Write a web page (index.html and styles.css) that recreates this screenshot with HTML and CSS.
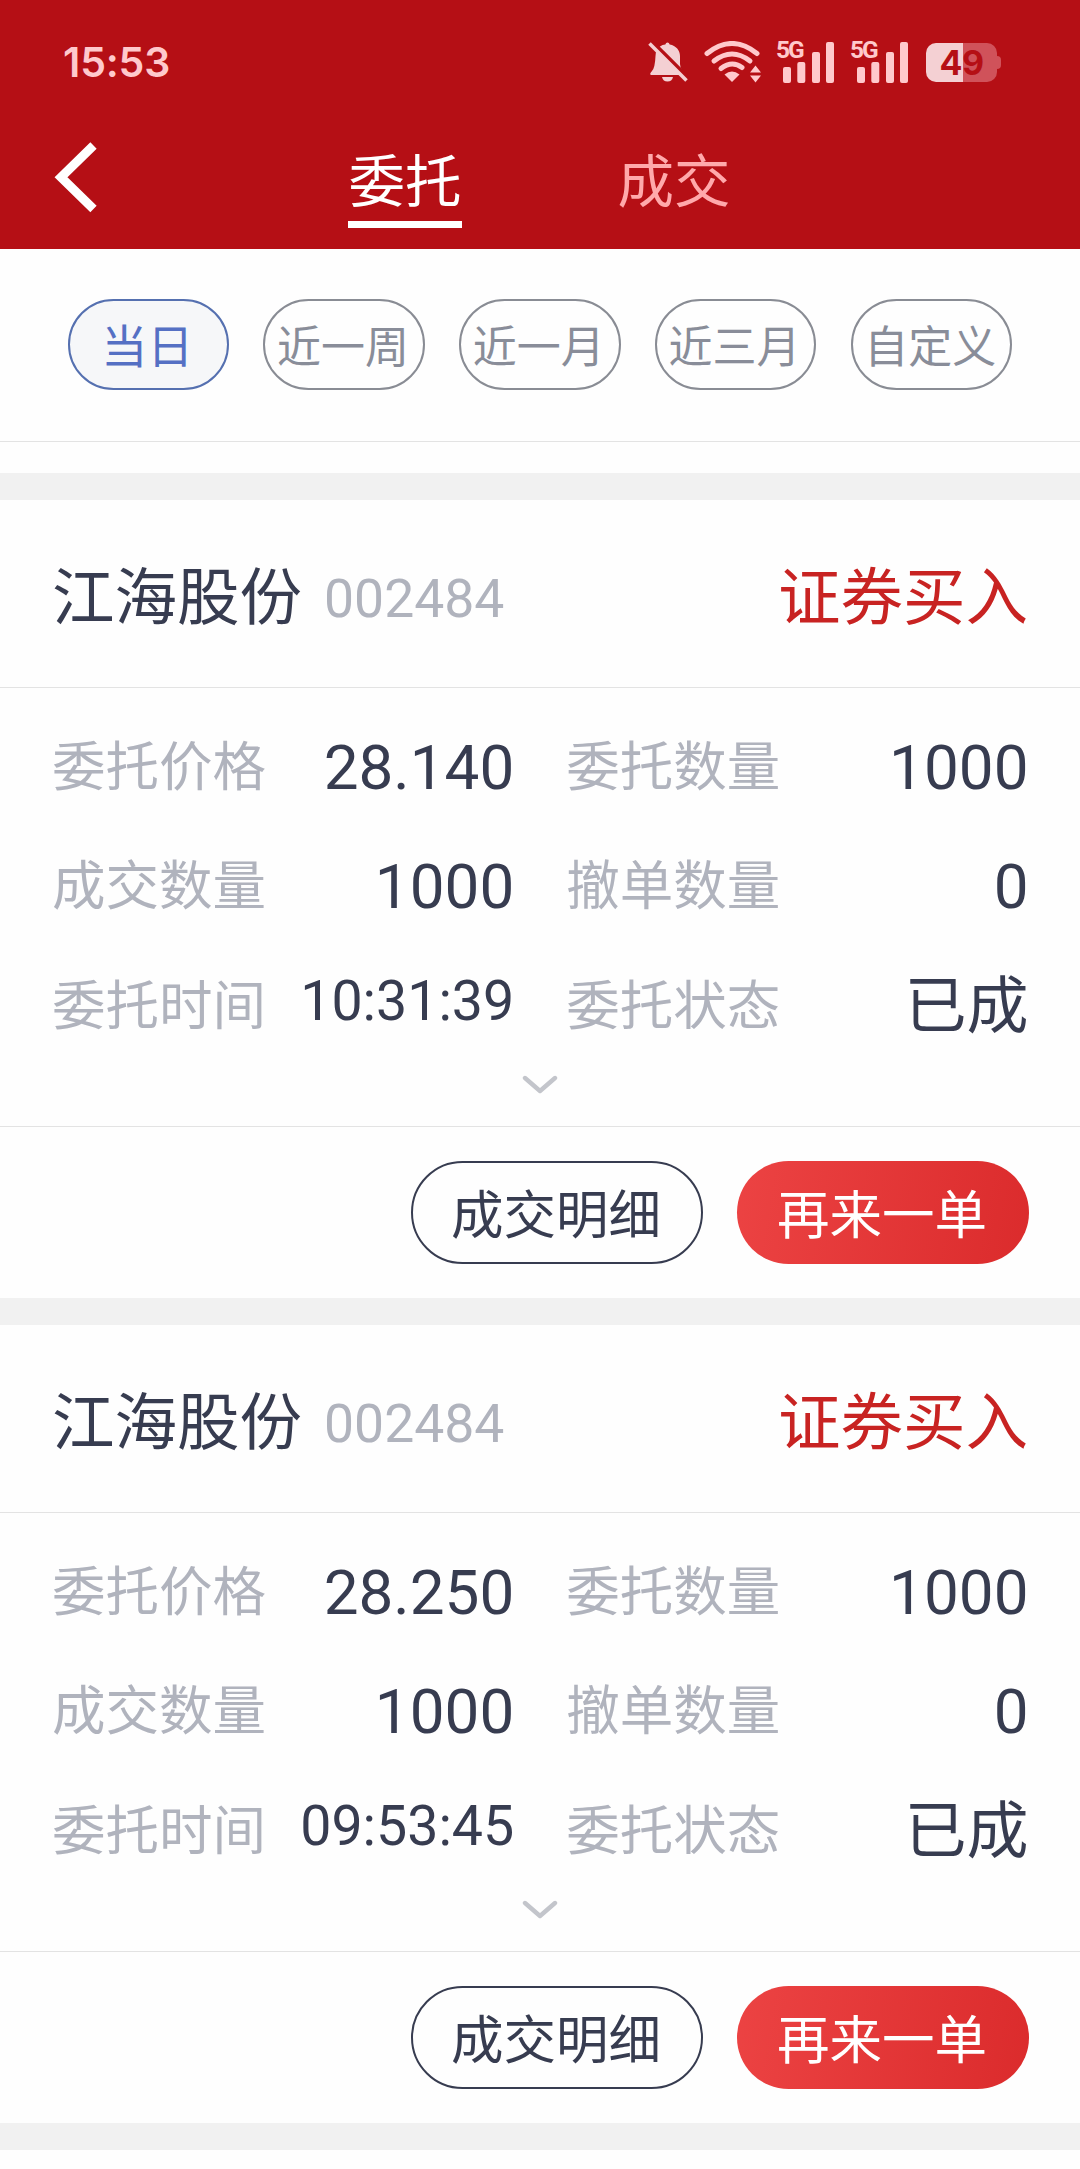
FILE: index.html
```html
<!DOCTYPE html>
<html lang="zh-CN">
<head>
<meta charset="utf-8">
<title>委托</title>
<link rel="stylesheet" href="styles.css">
</head>
<body>
<svg class="defs" aria-hidden="true">
  <symbol id="bars" viewBox="0 0 60 42">
    <rect x="6" y="26" width="8" height="16" rx="2"/>
    <rect x="20.3" y="21" width="8" height="21" rx="2"/>
    <rect x="35" y="11" width="8" height="31" rx="2"/>
    <rect x="49" y="1" width="8" height="41" rx="2"/>
  </symbol>
  <symbol id="chevron" viewBox="0 0 36 20">
    <path d="M3 3 L18 16 L33 3" fill="none" stroke="#c3c5cb" stroke-width="4.4" stroke-linecap="round" stroke-linejoin="round"/>
  </symbol>
</svg>
<header class="top">
  <div class="status">
    <span class="clock">15:53</span>
    <div class="status-icons">
      <svg class="bell" viewBox="0 0 40 40" width="40" height="40">
        <path d="M12 4.500 Q14.500 2.500 17.300 2.500 Q18 .500 19.500 .500 Q21 .500 21.700 2.500 C28 3.500 32 8.500 32 14 V22 Q32.500 28 37 31 Q38.500 33 36 33 H3 Q1 32 4 29 Q7 26 7.500 14 Q7.500 8 12 4.500 Z" fill="#f4d0d3"/>
        <path d="M14 35 H25 Q24 39.500 19.500 39.500 Q15 39.500 14 35Z" fill="#f4d0d3"/>
        <path d="M0 -4.300 L43 38.700" stroke="#b50f15" stroke-width="4"/>
        <path d="M1.500 1.500 L38.500 38.500" stroke="#f4d0d3" stroke-width="3.600"/>
      </svg>
      <svg class="wifi" viewBox="0 0 58 42" width="58" height="42">
        <g fill="none" stroke="#ffc9cc" stroke-width="5" stroke-linecap="round">
          <path d="M3 12.500 Q28 -7.500 53 12.500"/>
          <path d="M10 20 Q28 6 46 20"/>
          <path d="M17 27.500 Q28 19 38 26.500"/>
        </g>
        <path d="M20.500 33.500 Q28 27.500 35.500 33.500 L28 41 Z" fill="#ffc9cc"/>
        <path d="M46 31.500 L51.500 24.500 L57 31.500Z M46 34.500 H57 L51.500 41.500Z" fill="#ffc9cc"/>
      </svg>
      <div class="signal"><svg width="60" height="42" fill="#ffc9cc"><use href="#bars"/></svg><span class="net">5G</span></div>
      <div class="signal"><svg width="60" height="42" fill="#ffc9cc"><use href="#bars"/></svg><span class="net">5G</span></div>
      <div class="battery"><span class="level">49</span></div>
    </div>
  </div>
  <nav class="nav">
    <svg class="back" viewBox="0 0 44 72" width="44" height="72"><path d="M39.500 4.500 L7 36.300 L39.500 68" fill="none" stroke="#fff" stroke-width="9"/></svg>
    <span class="tab tab-on">委托</span>
    <span class="tab">成交</span>
  </nav>
</header>
<div class="filters">
  <span class="pill pill-on">当日</span>
  <span class="pill">近一周</span>
  <span class="pill">近一月</span>
  <span class="pill">近三月</span>
  <span class="pill">自定义</span>
</div>
<main class="orders">
  <article class="card">
    <div class="card-head">
      <span class="name">江海股份</span><span class="code">002484</span><span class="side">证券买入</span>
    </div>
    <div class="card-body">
      <div class="grid">
        <div class="cell"><span class="label">委托价格</span><span class="value">28.140</span></div>
        <div class="cell"><span class="label">委托数量</span><span class="value">1000</span></div>
        <div class="cell"><span class="label">成交数量</span><span class="value">1000</span></div>
        <div class="cell"><span class="label">撤单数量</span><span class="value">0</span></div>
        <div class="cell"><span class="label">委托时间</span><span class="value time">10:31:39</span></div>
        <div class="cell"><span class="label">委托状态</span><span class="value">已成</span></div>
      </div>
      <svg class="more" width="36" height="20"><use href="#chevron"/></svg>
    </div>
    <div class="card-foot"><span class="btn">成交明细</span><span class="btn btn-main">再来一单</span></div>
  </article>
  <article class="card">
    <div class="card-head">
      <span class="name">江海股份</span><span class="code">002484</span><span class="side">证券买入</span>
    </div>
    <div class="card-body">
      <div class="grid">
        <div class="cell"><span class="label">委托价格</span><span class="value">28.250</span></div>
        <div class="cell"><span class="label">委托数量</span><span class="value">1000</span></div>
        <div class="cell"><span class="label">成交数量</span><span class="value">1000</span></div>
        <div class="cell"><span class="label">撤单数量</span><span class="value">0</span></div>
        <div class="cell"><span class="label">委托时间</span><span class="value time">09:53:45</span></div>
        <div class="cell"><span class="label">委托状态</span><span class="value">已成</span></div>
      </div>
      <svg class="more" width="36" height="20"><use href="#chevron"/></svg>
    </div>
    <div class="card-foot"><span class="btn">成交明细</span><span class="btn btn-main">再来一单</span></div>
  </article>
</main>
</body>
</html>
```
FILE: styles.css
```css
* { box-sizing: border-box; }
body {
  margin: 0;
  width: 1080px;
  height: 2169px;
  overflow: hidden;
  background: #fefefe;
  color: #373c50;
  font-family: Roboto, "Noto Sans CJK SC", sans-serif;
  white-space: nowrap;
}
.defs { display: none; }
svg { display: block; flex: none; }

.top { height: 249px; background: #b50f15; }
.status {
  display: flex;
  align-items: center;
  justify-content: space-between;
  height: 124px;
  padding: 0 79px 0 63px;
}
.clock { font: 600 41px/50px Inter, sans-serif; letter-spacing: -0.2px; color: #ffc9cc; }
.status-icons { display: flex; align-items: center; }
.wifi { margin-left: 16px; }
.signal { position: relative; margin-left: 14px; }
.wifi + .signal { margin-left: 15px; }
.net {
  position: absolute;
  left: -1px;
  top: -3px;
  font: 700 24.5px/24px "Roboto", sans-serif;
  letter-spacing: -2px;
  color: #ffc9cc;
}
.battery {
  position: relative;
  width: 71px;
  height: 39px;
  margin: 0 4px 0 15px;
  border-radius: 10px;
  background: linear-gradient(90deg, #f4d0d3 37px, #d0525a 37px);
  text-align: center;
}
.battery::after {
  content: "";
  position: absolute;
  left: 71px;
  top: 13px;
  width: 4px;
  height: 13px;
  border-radius: 0 4px 4px 0;
  background: #d0525a;
}
.level { font: 700 34px/39px Inter, sans-serif; letter-spacing: -0.5px; color: #b50f15; }

.nav { display: flex; height: 104px; padding-left: 54px; }
.back { margin-top: 17px; }
.tab {
  width: 114px;
  height: 104px;
  margin-left: 155px;
  padding-top: 26px;
  font-size: 56.5px;
  line-height: 66px;
  text-align: center;
  color: #ffa9ab;
}
.tab-on { margin-left: 250px; color: #fff; border-bottom: 7px solid #fff; }

.filters {
  display: grid;
  grid-template-columns: repeat(5, 161.5px);
  justify-content: space-between;
  height: 193px;
  padding: 50px 68px 0 67.5px;
  border-bottom: 1px solid #e3e3e3;
}
.pill {
  height: 91px;
  padding-right: 2px;
  border: 2px solid #898c94;
  border-radius: 46px;
  font-size: 44px;
  line-height: 94px;
  text-align: center;
  color: #898d99;
}
.pill-on { border-color: #5570b0; background: #f6f7f9; color: #5570c4; font-size: 46px; line-height: 92px; }

.orders { padding-top: 31px; }
.card { border-top: 27px solid #f1f1f1; }
.card:last-child { border-bottom: 27px solid #f1f1f1; }
.card-head {
  display: flex;
  height: 188px;
  padding: 61px 52px 0 52px;
  border-bottom: 1px solid #e3e3e3;
  line-height: 76px;
}
.name, .side { font-size: 62.5px; }
.code { margin-left: 22px; font-size: 53.5px; line-height: 75px; color: #b0b3bd; }
.side { margin-left: auto; color: #c82322; }
.card-body { height: 439px; padding: 20px 51.5px 0 52px; border-bottom: 1px solid #e3e3e3; }
.grid {
  display: grid;
  grid-template-columns: 1fr 1fr;
  grid-auto-rows: 119.3px;
  column-gap: 52px;
  line-height: 119px;
}
.cell { display: flex; justify-content: space-between; }
.label { font-size: 53.5px; line-height: 120px; color: #b0b3bd; }
.value { font-size: 62px; }
.time { font-size: 55.5px; line-height: 109px; }
.more { margin: 9px auto 0; }
.card-foot { display: flex; justify-content: flex-end; gap: 34px; padding: 34px 51px 34px 0; }
.btn {
  width: 292px;
  height: 103px;
  padding-right: 2px;
  border: 2px solid #373c50;
  border-radius: 52px;
  font-size: 52.5px;
  line-height: 107px;
  text-align: center;
}
.btn-main { border: 0; line-height: 111px; color: #fff; background: linear-gradient(100deg, #ec4343, #db2b2c); }
```
